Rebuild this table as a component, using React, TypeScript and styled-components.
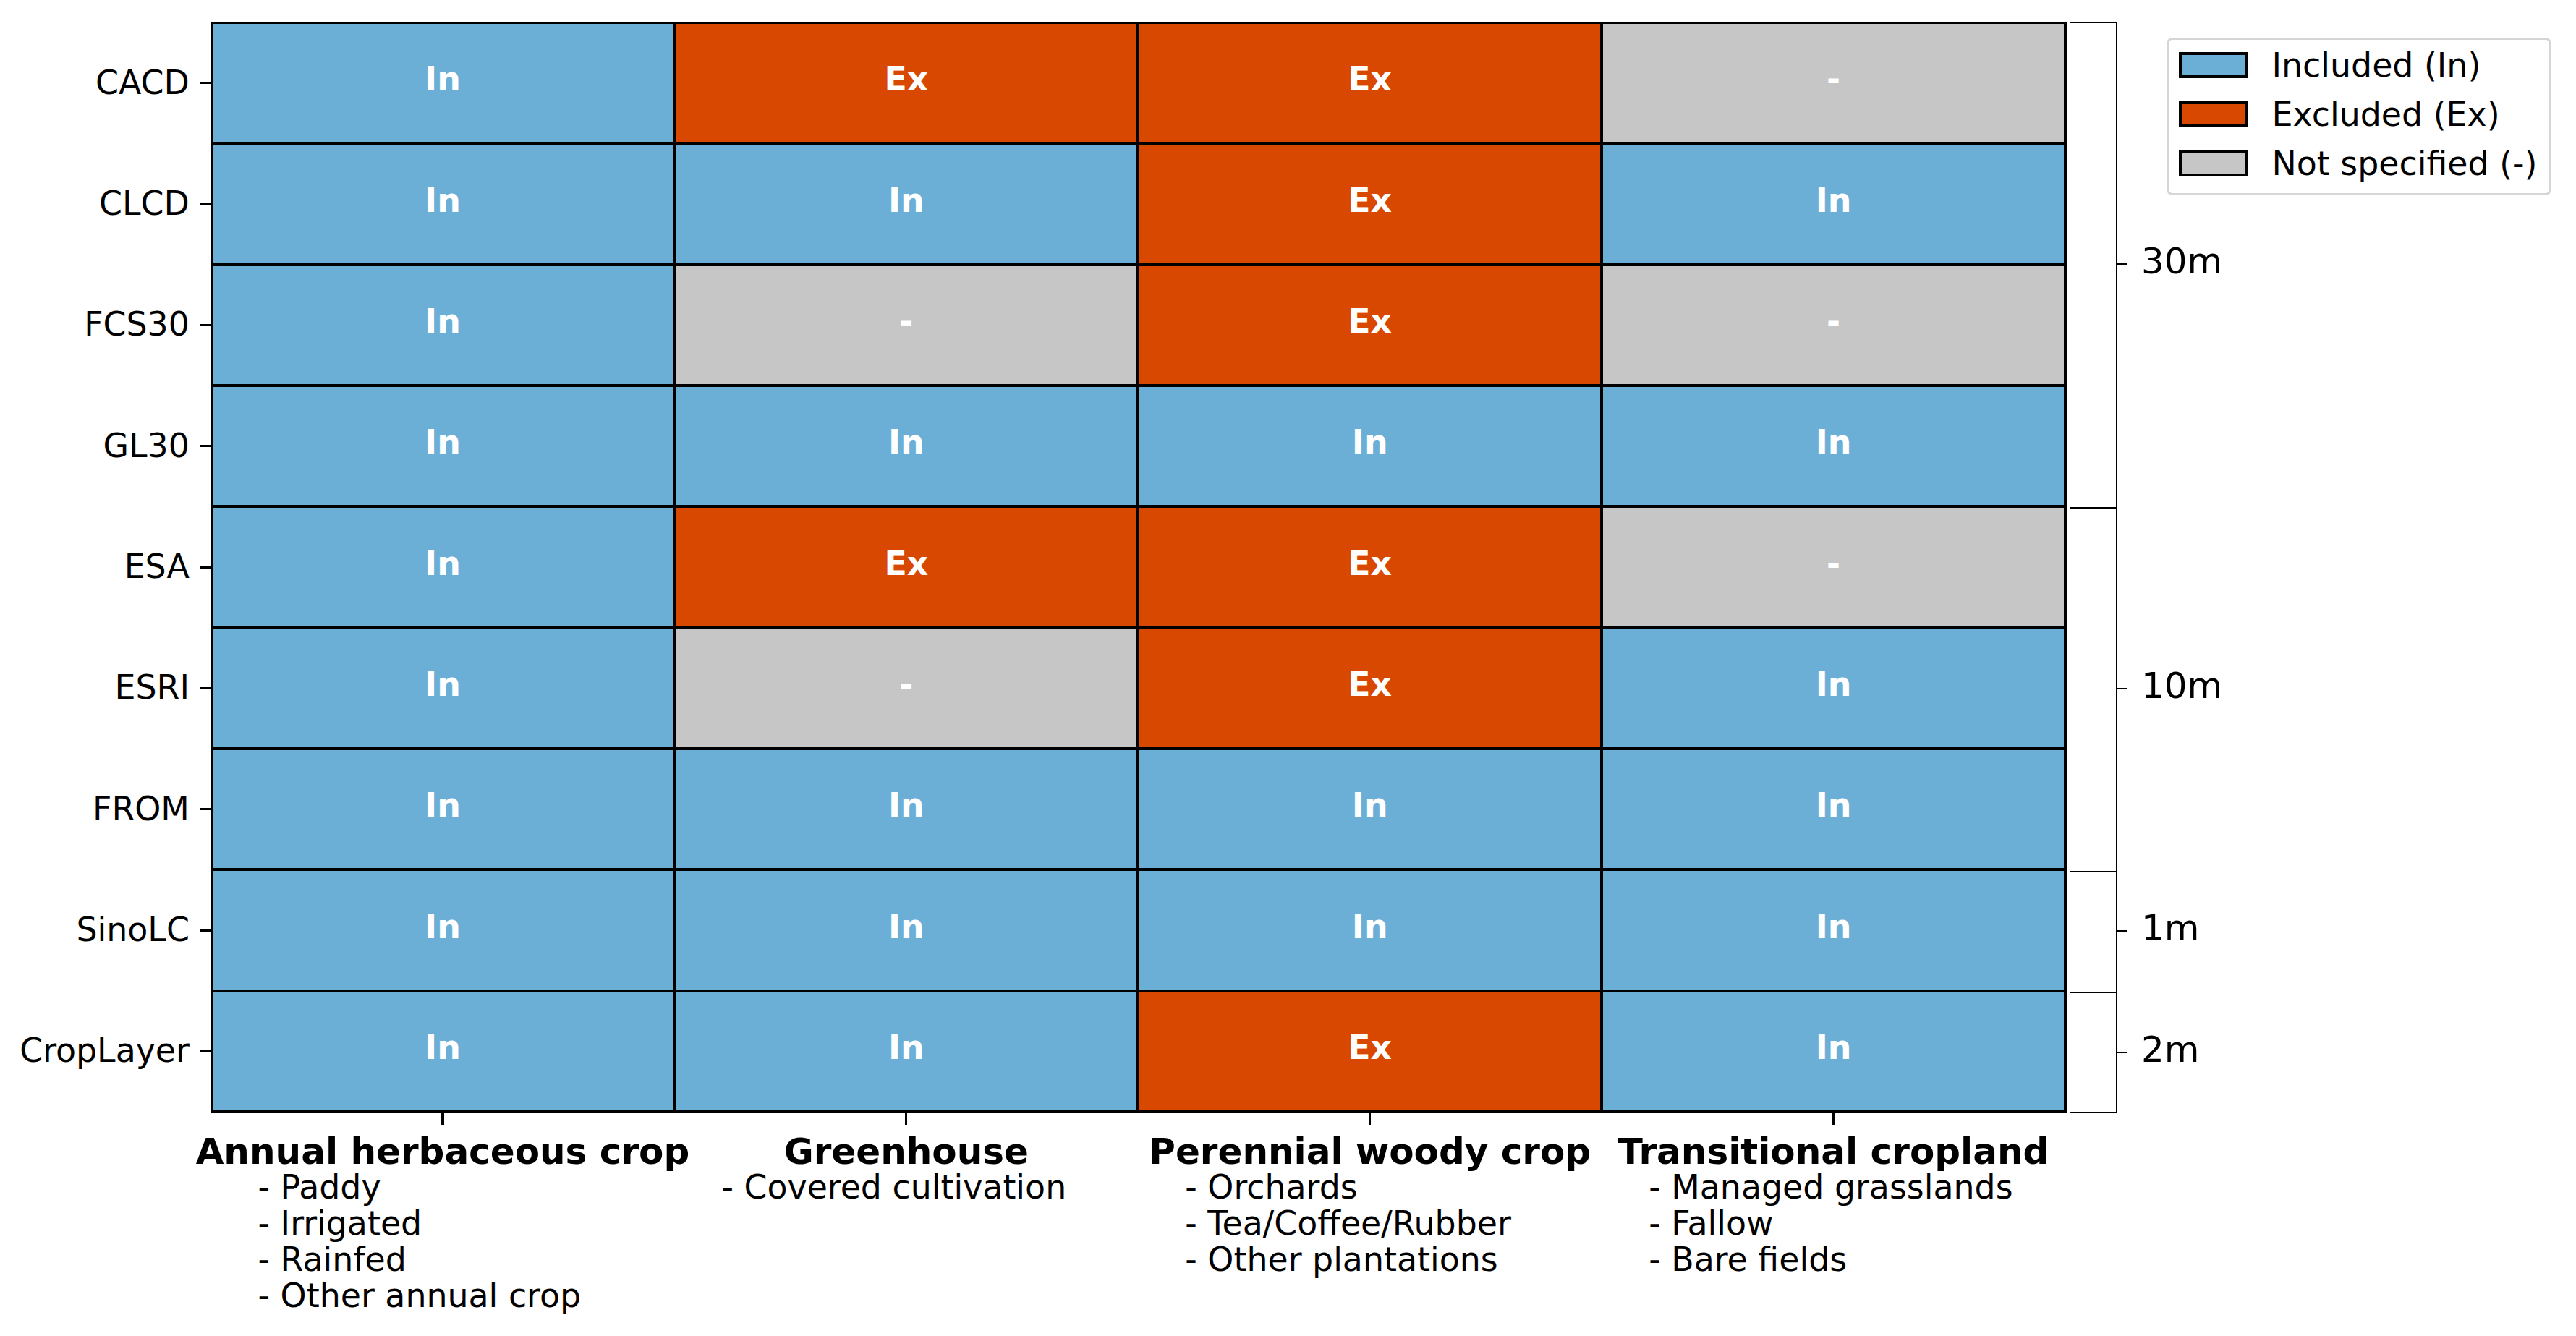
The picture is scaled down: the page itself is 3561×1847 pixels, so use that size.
import React from "react";
import styled, { createGlobalStyle } from "styled-components";

const GlobalStyle = createGlobalStyle`
  html, body { margin: 0; padding: 0; background: #ffffff; }
  body { font-family: "DejaVu Sans", "Liberation Sans", sans-serif; color: #000000; }
`;

type Status = "In" | "Ex" | "-";

const COLORS: Record<Status, string> = {
  In: "#6baed6",
  Ex: "#d94801",
  "-": "#c6c6c6",
};

const ROWS: { name: string; cells: Status[] }[] = [
  { name: "CACD", cells: ["In", "Ex", "Ex", "-"] },
  { name: "CLCD", cells: ["In", "In", "Ex", "In"] },
  { name: "FCS30", cells: ["In", "-", "Ex", "-"] },
  { name: "GL30", cells: ["In", "In", "In", "In"] },
  { name: "ESA", cells: ["In", "Ex", "Ex", "-"] },
  { name: "ESRI", cells: ["In", "-", "Ex", "In"] },
  { name: "FROM", cells: ["In", "In", "In", "In"] },
  { name: "SinoLC", cells: ["In", "In", "In", "In"] },
  { name: "CropLayer", cells: ["In", "In", "Ex", "In"] },
];

const COLUMNS: { title: string; items: string[] }[] = [
  { title: "Annual herbaceous crop", items: ["Paddy", "Irrigated", "Rainfed", "Other annual crop"] },
  { title: "Greenhouse", items: ["Covered cultivation"] },
  { title: "Perennial woody crop", items: ["Orchards", "Tea/Coffee/Rubber", "Other plantations"] },
  { title: "Transitional cropland", items: ["Managed grasslands", "Fallow", "Bare fields"] },
];

const GROUPS: { label: string; span: number }[] = [
  { label: "30m", span: 4 },
  { label: "10m", span: 3 },
  { label: "1m", span: 1 },
  { label: "2m", span: 1 },
];

const LEGEND: { status: Status; label: string }[] = [
  { status: "In", label: "Included (In)" },
  { status: "Ex", label: "Excluded (Ex)" },
  { status: "-", label: "Not specified (-)" },
];

const Figure = styled.div`
  display: flex;
  align-items: flex-start;
  width: 3561px;
  height: 1847px;
  background: #ffffff;
  overflow: hidden;
`;

const Plot = styled.div`
  display: grid;
  grid-template-columns: 291.5px 2565.5px;
  grid-template-rows: 1508px auto;
  margin-top: 31px;
  flex-shrink: 0;
`;

const YAxis = styled.div`
  grid-row: 1;
  grid-column: 1;
  display: grid;
  grid-template-rows: repeat(9, minmax(0, 1fr));
  row-gap: 4px;
  padding: 2px 0 4px;
  box-sizing: border-box;
`;

const YLabel = styled.div`
  display: flex;
  align-items: center;
  justify-content: flex-end;
`;

const YText = styled.span`
  font-size: 45.83px;
  line-height: 1;
  margin-right: 14.6px;
  white-space: nowrap;
`;

const YTick = styled.span`
  width: 15px;
  height: 3.3px;
  background: #000000;
  flex-shrink: 0;
`;

const Matrix = styled.div`
  grid-row: 1;
  grid-column: 2;
  display: grid;
  grid-template-columns: repeat(4, minmax(0, 1fr));
  grid-template-rows: repeat(9, minmax(0, 1fr));
  gap: 4px;
  padding: 2px 4px 4px 2px;
  background: #000000;
  box-sizing: border-box;
`;

const Cell = styled.div<{ $status: Status }>`
  background: ${(p) => COLORS[p.$status]};
  display: flex;
  align-items: center;
  justify-content: center;
  padding-bottom: 9px;
  box-sizing: border-box;
  color: #ffffff;
  font-weight: bold;
  font-size: 45.83px;
  line-height: 1;
`;

const XAxis = styled.div`
  grid-row: 2;
  grid-column: 2;
  display: grid;
  grid-template-columns: repeat(4, minmax(0, 1fr));
  column-gap: 4px;
  padding: 0 4px 0 2px;
`;

const XGroup = styled.div`
  display: flex;
  flex-direction: column;
  align-items: center;
  min-width: 0;
`;

const XTick = styled.span`
  width: 3.3px;
  height: 16px;
  background: #000000;
`;

const XTitle = styled.div`
  margin-top: 12px;
  font-weight: bold;
  font-size: 50px;
  line-height: 50px;
  white-space: nowrap;
`;

const XItems = styled.ul`
  align-self: stretch;
  list-style: none;
  margin: -1px 0 0;
  padding: 0 0 0 63px;
  font-size: 45.83px;
  line-height: 50px;
  white-space: nowrap;
`;

const Bracket = styled.div<{ $rows: string }>`
  display: grid;
  grid-template-rows: ${(p) => p.$rows};
  margin: 30px 0 0 4px;
  width: 134px;
  height: 1509px;
  flex-shrink: 0;
`;

const BracketGroup = styled.div`
  display: flex;
  align-items: center;
  min-height: 0;
`;

const BracketBox = styled.div<{ $last: boolean }>`
  align-self: stretch;
  width: 66px;
  flex-shrink: 0;
  box-sizing: border-box;
  border-top: 2px solid #000000;
  border-right: 2px solid #000000;
  border-bottom: ${(p) => (p.$last ? "2px solid #000000" : "none")};
`;

const BracketTick = styled.span`
  width: 13px;
  height: 2px;
  background: #000000;
  flex-shrink: 0;
`;

const BracketLabel = styled.span`
  margin-left: 20px;
  font-size: 50px;
  line-height: 50px;
  padding-bottom: 8px;
  white-space: nowrap;
  flex-shrink: 0;
`;

const Legend = styled.div`
  margin-top: 52px;
  border: 3px solid #d6d6d6;
  border-radius: 8px;
  padding: 7px 17px 14px 14px;
  display: flex;
  flex-direction: column;
  gap: 13px;
  flex-shrink: 0;
  background: #ffffff;
`;

const LegendRow = styled.div`
  display: flex;
  align-items: center;
  height: 55px;
`;

const Swatch = styled.span<{ $status: Status }>`
  width: 95px;
  height: 36px;
  box-sizing: border-box;
  border: 4px solid #000000;
  background: ${(p) => COLORS[p.$status]};
  flex-shrink: 0;
`;

const LegendLabel = styled.span`
  margin-left: 33.5px;
  font-size: 45.83px;
  white-space: nowrap;
`;

export default function App() {
  return (
    <>
      <GlobalStyle />
      <Figure>
        <Plot>
          <YAxis>
            {ROWS.map((r) => (
              <YLabel key={r.name}>
                <YText>{r.name}</YText>
                <YTick />
              </YLabel>
            ))}
          </YAxis>
          <Matrix>
            {ROWS.map((r) =>
              r.cells.map((c, i) => (
                <Cell key={`${r.name}-${i}`} $status={c}>
                  {c}
                </Cell>
              ))
            )}
          </Matrix>
          <XAxis>
            {COLUMNS.map((col) => (
              <XGroup key={col.title}>
                <XTick />
                <XTitle>{col.title}</XTitle>
                <XItems>
                  {col.items.map((it) => (
                    <li key={it}>- {it}</li>
                  ))}
                </XItems>
              </XGroup>
            ))}
          </XAxis>
        </Plot>
        <Bracket $rows={GROUPS.map((g) => `${g.span}fr`).join(" ")}>
          {GROUPS.map((g, i) => (
            <BracketGroup key={g.label}>
              <BracketBox $last={i === GROUPS.length - 1} />
              <BracketTick />
              <BracketLabel>{g.label}</BracketLabel>
            </BracketGroup>
          ))}
        </Bracket>
        <Legend>
          {LEGEND.map((l) => (
            <LegendRow key={l.label}>
              <Swatch $status={l.status} />
              <LegendLabel>{l.label}</LegendLabel>
            </LegendRow>
          ))}
        </Legend>
      </Figure>
    </>
  );
}
